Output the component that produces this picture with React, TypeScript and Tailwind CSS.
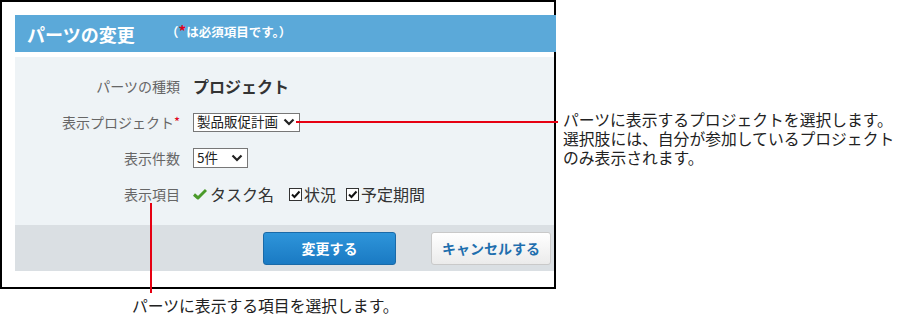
import React from "react";

const Chevron = () => (
  <svg width="12" height="8" viewBox="0 0 12 8" className="shrink-0">
    <path d="M1.5 1.5 L6 6 L10.5 1.5" fill="none" stroke="#222" strokeWidth="2.2" />
  </svg>
);

const GreenCheck = () => (
  <svg width="14" height="12" viewBox="0 0 14 12" className="shrink-0">
    <path d="M1 6.5 L5 10 L13 2" fill="none" stroke="#4a9a2a" strokeWidth="3" strokeLinejoin="round" />
  </svg>
);

const CheckBox = () => (
  <span className="w-[13px] h-[13px] border border-[#333] bg-white flex items-center justify-center shrink-0">
    <svg width="11" height="11" viewBox="0 0 11 11">
      <path d="M2 5.5 L4.5 8 L9.5 2.5" fill="none" stroke="#111" strokeWidth="2" />
    </svg>
  </span>
);

export default function App() {
  return (
    <div className="relative w-[910px] h-[322px] bg-white font-['Noto_Sans_CJK_JP','Noto_Sans',sans-serif] text-[#222]">
      <div className="flex items-start">
        {/* frame */}
        <div className="w-[556px] h-[289px] border-2 border-black pt-[13px] pl-[13px] pb-[16px] flex flex-col shrink-0">
          {/* header */}
          <div className="relative h-[37px] mr-[-2px] bg-[#5ba9d9] flex items-center pl-[12px]">
            <span className="w-[139px] text-[18px] font-bold text-white leading-none">パーツの変更</span>
            <span className="text-[12.5px] font-bold text-white leading-none -mt-[5px]">
              （<span className="text-[#e0001b] text-[15px]">*</span>は必須項目です。）
            </span>
          </div>
          <div className="h-[5px]" />
          {/* body */}
          <div className="bg-[#eef3f6] pt-[11px] pb-[13px] grid grid-cols-[165px_1fr] gap-x-[13px] auto-rows-[36px] items-center">
            <div className="text-right text-[14px] text-[#666]">パーツの種類</div>
            <div className="text-[16px] font-bold text-[#333]">プロジェクト</div>

            <div className="text-right text-[14px] text-[#666]">
              表示プロジェクト<span className="text-[#e0001b] text-[13px] align-top">*</span>
            </div>
            <div>
              <div className="w-[107px] h-[19px] border border-[#777] bg-white flex items-center justify-between pl-[3px] pr-[4px]">
                <span className="text-[13.5px] leading-none text-[#222]">製品販促計画</span>
                <Chevron />
              </div>
            </div>

            <div className="text-right text-[14px] text-[#666]">表示件数</div>
            <div>
              <div className="w-[55px] h-[20px] border border-[#777] bg-white flex items-center justify-between pl-[3px] pr-[4px]">
                <span className="text-[13.5px] leading-none text-[#222]">5件</span>
                <Chevron />
              </div>
            </div>

            <div className="text-right text-[14px] text-[#666]">表示項目</div>
            <div className="flex items-center text-[16px] text-[#333] leading-none">
              <GreenCheck />
              <span className="ml-[3px]">タスク名</span>
              <span className="ml-[15px] mr-[2px]"><CheckBox /></span>
              <span>状況</span>
              <span className="ml-[10px] mr-[2px]"><CheckBox /></span>
              <span>予定期間</span>
            </div>
          </div>
          {/* footer */}
          <div className="h-[46px] bg-[#dadfe3] flex items-center justify-end gap-[35px] pr-[3px]">
            <button className="w-[133px] h-[33px] rounded-[3px] border border-[#1a6aa8] bg-gradient-to-b from-[#2e95da] to-[#1a7ac3] text-white text-[14px] font-bold">
              変更する
            </button>
            <button className="w-[120px] h-[33px] rounded-[3px] border border-[#c9c9c9] bg-gradient-to-b from-[#ffffff] to-[#ebebeb] text-[#1f6fae] text-[14px] font-bold">
              キャンセルする
            </button>
          </div>
        </div>
        {/* right annotation text */}
        <div className="ml-[7px] mt-[110px] text-[15.8px] leading-[19px] text-[#222] whitespace-nowrap">
          パーツに表示するプロジェクトを選択します。
          <br />
          選択肢には、自分が参加しているプロジェクト
          <br />
          のみ表示されます。
        </div>
      </div>
      {/* bottom annotation text */}
      <div className="pl-[132px] mt-[7px] text-[15.8px] leading-[19px] text-[#222]">
        パーツに表示する項目を選択します。
      </div>

      {/* callout lines */}
      <div className="absolute left-[296px] top-[121px] w-[262px] h-[2px] bg-[#e60012]" />
      <div className="absolute left-[150px] top-[203px] w-[2px] h-[90px] bg-[#e60012]" />
    </div>
  );
}
